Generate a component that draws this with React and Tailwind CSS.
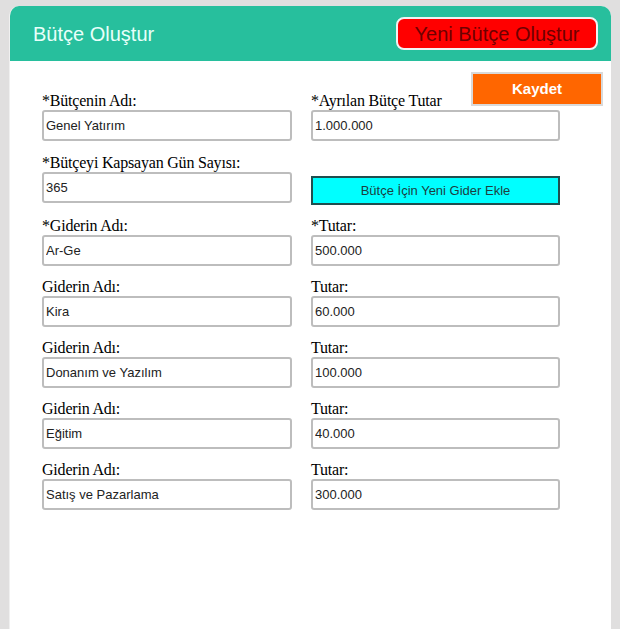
import React from 'react';

const expenses = [
  { name: 'Ar-Ge', amount: '500.000', required: true },
  { name: 'Kira', amount: '60.000' },
  { name: 'Donanım ve Yazılım', amount: '100.000' },
  { name: 'Eğitim', amount: '40.000' },
  { name: 'Satış ve Pazarlama', amount: '300.000' },
];

const Field = ({ label, value, className = '' }) => (
  <div className={`flex flex-col ${className}`}>
    <label className="h-[19px] text-[16px] leading-[19px] text-black font-['Liberation_Serif',serif] tracking-[-0.2px]">
      {label}
    </label>
    <input
      readOnly
      value={value}
      className="h-[31px] w-full rounded-[3px] border-2 border-[#bdbdbd] bg-white px-[2px] text-[13px] text-[#222] font-['Liberation_Sans',Arial,sans-serif] outline-none"
    />
  </div>
);

const App = () => {
  return (
    <div className="min-h-[629px] bg-[#e0dfdf] pl-[9px] pr-[9px] pt-[6px] font-['Liberation_Sans',Arial,sans-serif]">
      <div className="min-h-[623px] rounded-t-[10px] bg-white overflow-hidden border-l border-[#f0f0f0]">
        {/* Header */}
        <div className="flex h-[55px] items-center justify-between bg-[#27bf9d] pl-[23px] pr-[13px]">
          <h1 className="text-[20px] text-[#e9fffa]">Bütçe Oluştur</h1>
          <button className="h-[33px] w-[202px] rounded-[8px] border-2 border-[#f2f2f2] bg-[#ff0000] text-[20px] leading-none text-[#6e0000]">
            Yeni Bütçe Oluştur
          </button>
        </div>

        {/* Body */}
        <div className="pt-[11px]">
          <div className="flex justify-end pr-[8px]">
            <button className="h-[34px] w-[132px] border-2 border-[#d9d9d9] bg-[#ff6600] text-[15px] font-bold text-white">
              Kaydet
            </button>
          </div>

          <div className="-mt-[15px] grid grid-cols-[250px_249px] gap-x-[19px] gap-y-[11px] pl-[32px]">
            <Field label="*Bütçenin Adı:" value="Genel Yatırım" />
            <Field label="*Ayrılan Bütçe Tutar" value="1.000.000" />

            <Field label="*Bütçeyi Kapsayan Gün Sayısı:" value="365" className="pt-[1px]" />
            <div className="pt-[24px]">
              <button className="h-[29px] w-full border-2 border-[#1f4f4f] bg-[#00ffff] text-[13px] text-[#1d3f3f]">
                Bütçe İçin Yeni Gider Ekle
              </button>
            </div>

            {expenses.map((e) => (
              <React.Fragment key={e.name}>
                <Field label={e.required ? '*Giderin Adı:' : 'Giderin Adı:'} value={e.name} />
                <Field label={e.required ? '*Tutar:' : 'Tutar:'} value={e.amount} />
              </React.Fragment>
            ))}
          </div>
        </div>
      </div>
    </div>
  );
};

export default App;
